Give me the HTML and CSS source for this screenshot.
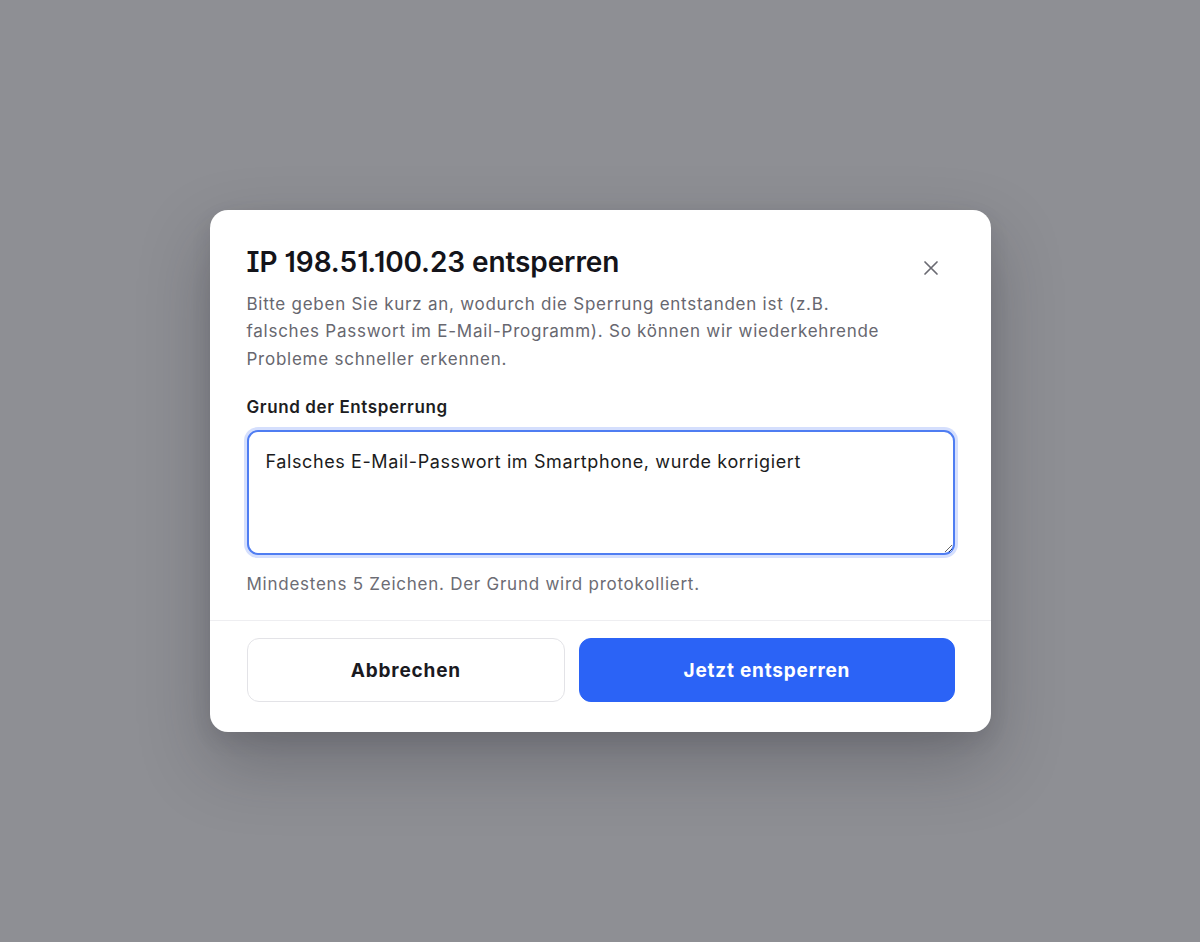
FILE: index.html
```html
<!DOCTYPE html>
<html lang="de">
<head>
<meta charset="utf-8">
<title>IP entsperren</title>
<link rel="stylesheet" href="styles.css">
</head>
<body>
<div class="backdrop">
  <div class="modal" role="dialog" aria-labelledby="dlg-title">
    <div class="modal-body">
      <div class="header">
        <div class="header-text">
          <h2 id="dlg-title" class="title">IP 198.51.100.23 entsperren</h2>
          <p class="desc">Bitte geben Sie kurz an, wodurch die Sperrung entstanden ist (z.B. falsches Passwort im E-Mail-Programm). So können wir wiederkehrende Probleme schneller erkennen.</p>
        </div>
        <button class="close" aria-label="Schließen">
          <svg width="16" height="16" viewBox="0 0 16 16" fill="none" stroke="currentColor" stroke-width="1.7" stroke-linecap="round"><path d="M2 2L14 14M14 2L2 14"/></svg>
        </button>
      </div>
      <label class="label" for="reason">Grund der Entsperrung</label>
      <textarea id="reason" class="textarea">Falsches E-Mail-Passwort im Smartphone, wurde korrigiert</textarea>
      <p class="hint">Mindestens 5 Zeichen. Der Grund wird protokolliert.</p>
    </div>
    <div class="footer">
      <button class="btn btn-secondary">Abbrechen</button>
      <button class="btn btn-primary">Jetzt entsperren</button>
    </div>
  </div>
</div>
</body>
</html>
```

FILE: styles.css
```css
* { box-sizing: border-box; }
html, body {
  margin: 0;
  height: 100%;
}
body {
  background: #8e8f94;
  font-family: Inter, "Noto Sans", sans-serif;
  color: #17171c;
}
.backdrop {
  min-height: 100%;
  display: flex;
  align-items: center;
  justify-content: center;
}
.modal {
  width: 781px;
  background: #ffffff;
  border-radius: 18px;
  box-shadow: 0 30px 70px rgba(30, 30, 40, 0.28), 0 8px 20px rgba(30, 30, 40, 0.10);
  overflow: hidden;
}
.modal-body {
  padding: 35px 36px 22px 37px;
  display: flex;
  flex-direction: column;
}
.header {
  display: flex;
  gap: 16px;
  align-items: flex-start;
}
.header-text {
  flex: 1;
  min-width: 0;
}
.title {
  margin: 0;
  font-size: 28px;
  line-height: 34px;
  font-weight: 600;
  letter-spacing: -0.1px;
  color: #14141a;
  font-feature-settings: "cv01", "cv08";
}
.desc {
  margin: 12px 0 0;
  font-size: 17px;
  line-height: 27.5px;
  color: #67676f;
  letter-spacing: 0.75px;
}
.close {
  flex: none;
  width: 48px;
  height: 44px;
  margin-top: 1px;
  border: 0;
  background: transparent;
  color: #6a6a72;
  display: flex;
  align-items: center;
  justify-content: center;
  padding: 0;
  cursor: pointer;
}
.label {
  margin-top: 23px;
  font-size: 17px;
  line-height: 22px;
  font-weight: 600;
  letter-spacing: 0.6px;
  color: #1d1d22;
}
.textarea {
  margin-top: 12px;
  width: 100%;
  height: 125px;
  border: 2px solid #4f7df2;
  border-radius: 11px;
  box-shadow: 0 0 0 3px rgba(63, 110, 245, 0.22);
  padding: 16px 17px;
  font-family: Inter, "Noto Sans", sans-serif;
  font-size: 18px;
  line-height: 27px;
  letter-spacing: 0.6px;
  color: #1b1b20;
  resize: vertical;
  outline: none;
  background: #fff;
}
.hint {
  margin: 16px 0 0;
  font-size: 17px;
  line-height: 27px;
  color: #6c6c74;
  letter-spacing: 0.75px;
}
.footer {
  border-top: 1px solid #eeeef1;
  padding: 17px 36px 30px 37px;
  display: flex;
  gap: 14px;
}
.btn {
  flex: 1 1 auto;
  height: 64px;
  border-radius: 12px;
  font-family: Inter, "Noto Sans", sans-serif;
  font-size: 19px;
  font-weight: 700;
  letter-spacing: 0.8px;
  cursor: pointer;
}
.btn-secondary {
  background: #ffffff;
  border: 1px solid #e3e3e7;
  color: #1a1a1f;
}
.btn-primary {
  background: #2b63f6;
  border: 1px solid #2b63f6;
  color: #ffffff;
}
```
